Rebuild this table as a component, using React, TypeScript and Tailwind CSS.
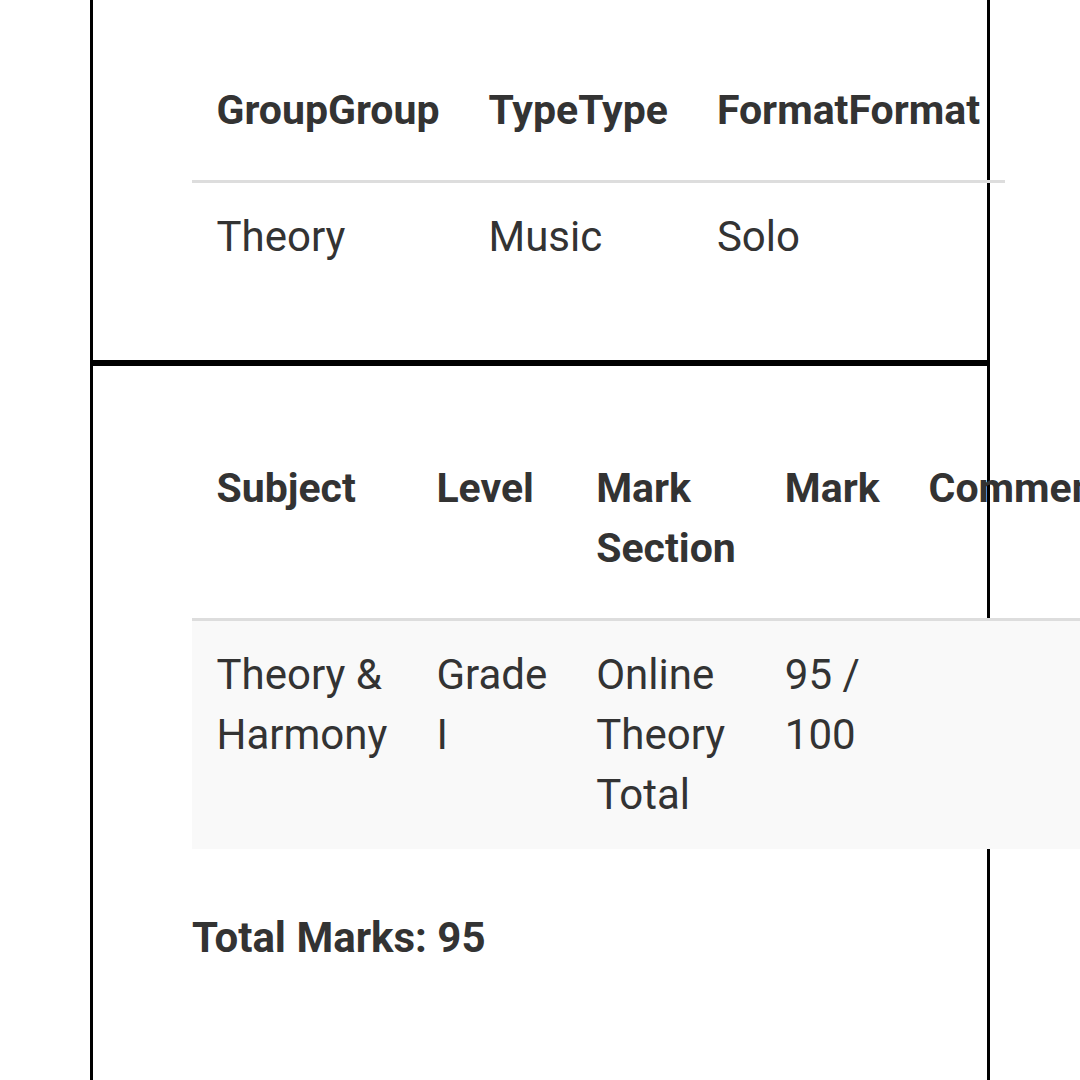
const font = { fontFamily: "Roboto, 'Noto Sans', sans-serif" };

const App = () => {
  const marks = [
    {
      subject: "Theory & Harmony",
      level: "Grade I",
      section: "Online Theory Total",
      mark: "95 / 100",
      comments: "",
    },
  ];

  return (
    <div className="min-h-[1080px] bg-white text-[#333333] overflow-hidden" style={font}>
      <div className="w-[900px] ml-[90px]">
        {/* Entry details */}
        <div className="border-x-[3px] border-b-[3px] border-black pt-[56px] pb-[69px] pl-[99px] pr-[99px]">
          <table className="border-collapse text-[42px] leading-[60px]">
            <thead>
              <tr className="border-b-[3px] border-[#dddddd]">
                <th className="text-left align-top font-bold text-[41px] px-[24.5px] pt-6 pb-10">GroupGroup</th>
                <th className="text-left align-top font-bold text-[41px] px-[24.5px] pt-6 pb-10">TypeType</th>
                <th className="text-left align-top font-bold text-[41px] px-[24.5px] pt-6 pb-10">FormatFormat</th>
              </tr>
            </thead>
            <tbody>
              <tr>
                <td className="align-top px-[24.5px] py-6">Theory</td>
                <td className="align-top px-[24.5px] py-6">Music</td>
                <td className="align-top px-[24.5px] py-6">Solo</td>
              </tr>
            </tbody>
          </table>
        </div>

        {/* Marks */}
        <div className="border-x-[3px] border-t-[3px] border-black pt-[68px] pb-40 pl-[99px] pr-[99px]">
          <table className="border-collapse text-[42px] leading-[60px]">
            <thead>
              <tr className="border-b-[3px] border-[#dddddd]">
                <th className="text-left align-top font-bold text-[41px] px-[24.5px] pt-6 pb-10">Subject</th>
                <th className="text-left align-top font-bold text-[41px] px-[24.5px] pt-6 pb-10">Level</th>
                <th className="text-left align-top font-bold text-[41px] px-[24.5px] pt-6 pb-10">Mark Section</th>
                <th className="text-left align-top font-bold text-[41px] px-[24.5px] pt-6 pb-10">Mark</th>
                <th className="text-left align-top font-bold text-[41px] px-[24.5px] pt-6 pb-10">Comments</th>
              </tr>
            </thead>
            <tbody>
              {marks.map((m, i) => (
                <tr key={i} className="bg-[#f9f9f9]">
                  <td className="align-top px-[24.5px] py-6">{m.subject}</td>
                  <td className="align-top px-[24.5px] py-6">{m.level}</td>
                  <td className="align-top px-[24.5px] py-6">{m.section}</td>
                  <td className="align-top px-[24.5px] py-6">{m.mark}</td>
                  <td className="align-top px-[24.5px] py-6">{m.comments}</td>
                </tr>
              ))}
            </tbody>
          </table>
          <p className="mt-[57px] text-[42px] leading-[63px] font-bold">Total Marks: 95</p>
        </div>
      </div>
    </div>
  );
};

export default App;
